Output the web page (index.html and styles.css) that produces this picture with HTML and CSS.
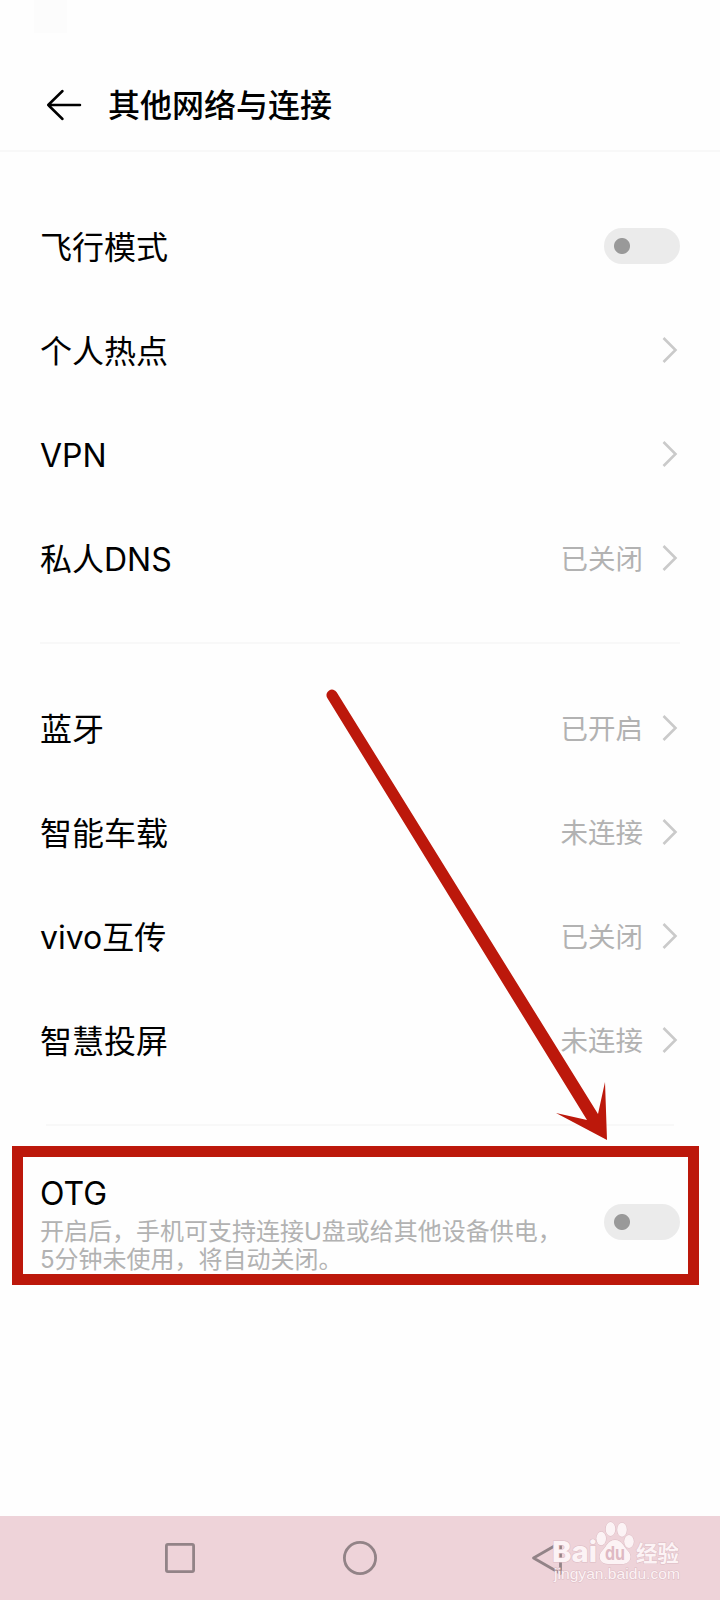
FILE: index.html
```
<!DOCTYPE html>
<html lang="zh-CN">
<head>
	<meta charset="UTF-8">
	<title>其他网络与连接</title>
	<link rel="stylesheet" href="styles.css">
</head>
<body>
<div class="phone">
	<div class="status"><span class="status-block"></span></div>
	<header class="header">
		<svg class="back" width="36" height="32" viewBox="0 0 36 32"><path d="M16.5 2L2.2 16L16.5 30M2.2 16H34" /></svg>
		<h1>其他网络与连接</h1>
	</header>

	<ul class="list">
		<li><span class="name">飞行模式</span><i class="switch"></i></li>
		<li><span class="name">个人热点</span><svg class="more" viewBox="0 0 16 28"><path d="M1.500 2L13.500 14L1.500 26" /></svg></li>
		<li><span class="name">VPN</span><svg class="more" viewBox="0 0 16 28"><path d="M1.500 2L13.500 14L1.500 26" /></svg></li>
		<li><span class="name">私人DNS</span><span class="state">已关闭</span><svg class="more" viewBox="0 0 16 28"><path d="M1.500 2L13.500 14L1.500 26" /></svg></li>
	</ul>
	<div class="line"></div>
	<ul class="list">
		<li><span class="name">蓝牙</span><span class="state">已开启</span><svg class="more" viewBox="0 0 16 28"><path d="M1.500 2L13.500 14L1.500 26" /></svg></li>
		<li><span class="name">智能车载</span><span class="state">未连接</span><svg class="more" viewBox="0 0 16 28"><path d="M1.500 2L13.500 14L1.500 26" /></svg></li>
		<li><span class="name">vivo互传</span><span class="state">已关闭</span><svg class="more" viewBox="0 0 16 28"><path d="M1.500 2L13.500 14L1.500 26" /></svg></li>
		<li><span class="name">智慧投屏</span><span class="state">未连接</span><svg class="more" viewBox="0 0 16 28"><path d="M1.500 2L13.500 14L1.500 26" /></svg></li>
	</ul>
	<div class="line line-last"></div>

	<div class="otg">
		<div class="otg-text">
			<span class="name">OTG</span>
			<p>开启后，手机可支持连接U盘或给其他设备供电，<br>5分钟未使用，将自动关闭。</p>
		</div>
		<i class="switch"></i>
	</div>

	<nav class="nav">
		<svg width="36" height="36" viewBox="0 0 36 36"><rect x="4.400" y="4.400" width="27.200" height="27.200" rx="1.500" /></svg>
		<svg width="36" height="36" viewBox="0 0 36 36"><circle cx="18" cy="18" r="15.600" /></svg>
		<svg width="48" height="36" viewBox="0 0 48 36"><path d="M11.500 18L38.500 2.500V33.500Z" /></svg>
	</nav>

	<svg class="arrow" width="290" height="456" viewBox="0 0 290 456">
		<path d="M16.7 6.2L278 428L285 396L287 454L236 427L267 434L7.3 12A5.5 5.5 0 0 1 16.7 6.2Z" />
	</svg>

	<svg class="mark" width="140" height="68" viewBox="0 0 140 68">
		<g>
			<ellipse cx="51.200" cy="22.500" rx="4.800" ry="6.800" />
			<ellipse cx="60.500" cy="13" rx="4.800" ry="7" />
			<ellipse cx="72" cy="13.800" rx="4.800" ry="7" />
			<ellipse cx="79" cy="25.500" rx="4.800" ry="6.400" />
			<path d="M65 24C58 24 56 31 52.500 34.500C47.500 39 49 48 58 48H72C81.500 48 82.500 39 77.500 34.500C74 31 72 24 65 24Z" />
		</g>
		<text class="bai" x="2" y="46" textLength="45" lengthAdjust="spacingAndGlyphs">Bai</text>
		<text class="du" x="55" y="44" textLength="20" lengthAdjust="spacingAndGlyphs">du</text>
		<text class="jy" x="86" y="45" textLength="43" lengthAdjust="spacingAndGlyphs">经验</text>
		<text class="site" x="4" y="63" textLength="126" lengthAdjust="spacingAndGlyphs">jingyan.baidu.com</text>
	</svg>
</div>
</body>
</html>
```
FILE: styles.css
```
body,html{
    padding: 0;
    margin: 0;
    background: #fefefe;
    color: #000000;
    font-family: Inter, "Noto Sans CJK SC", sans-serif;
}
.phone{
    position: relative;
    display: flex;
    flex-direction: column;
    width: 720px;
    height: 1600px;
    overflow: hidden;
}
.status{
    height: 58px;
    padding-left: 34px;
}
.status-block{
    display: block;
    width: 33px;
    height: 33px;
    background: #fcfcfc;
}
.header{
    display: flex;
    align-items: center;
    box-sizing: border-box;
    height: 94px;
    padding: 1px 0 0 46px;
    border-bottom: 2px solid #f8f8f8;
}
.back{
    fill: none;
    stroke: #000000;
    stroke-width: 2.5;
    stroke-linecap: round;
    stroke-linejoin: round;
}
h1{
    margin: 0 0 0 26px;
    padding-top: 2px;
    font-size: 32px;
    line-height: 44px;
    font-weight: 500;
}
.list{
    list-style: none;
    margin: 0;
    padding: 42px 40px 32px;
}
.line + .list{
    padding-top: 32px;
}
.list li{
    display: flex;
    align-items: center;
    height: 104px;
}
.name{
    flex: 1;
    font-size: 32px;
    line-height: 44px;
}
.list .name{
    padding-top: 4px;
}
.state{
    margin-right: 19px;
    padding-top: 1px;
    font-size: 27.500px;
    line-height: 40px;
    color: #b2b2b2;
}
.more{
    width: 16px;
    height: 28px;
    margin-right: 2px;
    fill: none;
    stroke: #cacaca;
    stroke-width: 2.600;
}
.switch{
    width: 76px;
    height: 36px;
    border-radius: 18px;
    background: radial-gradient(circle at 18px 18px, #999999 7.500px, #ebebeb 8.500px);
}
.line{
    height: 2px;
    margin: 0 40px;
    background: #f8f8f8;
}
.line-last{
    margin: 0 46px;
}
.otg{
    display: flex;
    box-sizing: border-box;
    width: 687px;
    height: 139px;
    margin: 20px 0 0 12px;
    padding: 24px 8px 0 17px;
    border: 11px solid #bc180b;
}
.otg-text{
    flex: 1;
    margin-top: -9px;
}
.otg p{
    margin: 2px 0 0;
    font-size: 24px;
    line-height: 27.500px;
    color: #b2b2b2;
    white-space: nowrap;
}
.otg .switch{
    margin-top: 23px;
}
.nav{
    display: flex;
    align-items: center;
    gap: 144px;
    height: 84px;
    margin-top: auto;
    padding-left: 162px;
    background: #eed3d9;
}
.nav svg{
    fill: none;
    stroke: #928387;
    stroke-width: 2.8;
    stroke-linejoin: round;
}
.arrow{
    position: absolute;
    left: 320px;
    top: 686px;
    fill: #bc180b;
}
/* watermark lies over the nav bar */
.mark{
    position: absolute;
    left: 550px;
    top: 1516px;
    fill: #fcf3f5;
    stroke: #dcbcc4;
    stroke-width: 1;
    paint-order: stroke;
}
.bai{
    font: 800 29px Inter, sans-serif;
}
.du{
    font: bold 19px Inter, sans-serif;
    fill: #dfb9c3;
    stroke: none;
}
.jy{
    font: bold 22px "Noto Sans CJK SC", sans-serif;
}
.site{
    font: 15px "Liberation Sans", sans-serif;
}
```
